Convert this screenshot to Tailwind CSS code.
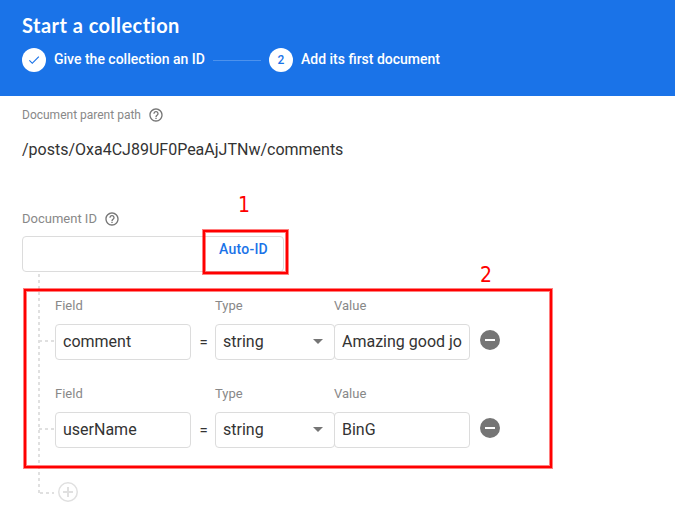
<!DOCTYPE html>
<html lang="en">
<head>
<meta charset="utf-8">
<title>Start a collection</title>
<script src="https://cdn.jsdelivr.net/npm/@tailwindcss/browser@4"></script>
</head>
<body class="relative h-[527px] w-[675px] overflow-hidden bg-white font-['Roboto',sans-serif] text-[#333333]">
<header class="flex h-24 flex-col bg-[#1a73e8] px-[22px] pt-[13px] text-white">
  <h1 class="h-6 font-['Lato',sans-serif] text-[20px] leading-6 font-bold tracking-[0.47px] whitespace-nowrap">Start a collection</h1>
  <div class="mt-[11px] flex h-6 items-center text-sm font-medium whitespace-nowrap">
    <span class="flex size-6 items-center justify-center rounded-full bg-white">
      <svg class="size-3.5" viewBox="0 0 24 24" fill="#1a73e8"><path d="M9 16.2L4.8 12l-1.4 1.4L9 19 21 7l-1.4-1.4z"/></svg>
    </span>
    <span class="ml-2 w-[151px] pb-0.5">Give the collection an ID</span>
    <span class="mx-2 mt-px h-px w-12 bg-[#4d92ed]"></span>
    <span class="flex size-6 items-center justify-center rounded-full bg-white text-xs text-[#1a73e8]">2</span>
    <span class="ml-2 pb-0.5">Add its first document</span>
  </div>
</header>
<main class="px-[22px] pt-[11px]">
  <div class="flex h-4 items-center text-xs text-[#888888]">
    <span>Document parent path</span>
    <svg class="ml-[7px] size-4" viewBox="0 0 24 24" fill="#757575"><path d="M11 18h2v-2h-2v2zm1-16C6.48 2 2 6.48 2 12s4.480 10 10 10 10-4.480 10-10S17.520 2 12 2zm0 18c-4.410 0-8-3.590-8-8s3.590-8 8-8 8 3.590 8 8-3.590 8-8 8zm0-14c-2.210 0-4 1.790-4 4h2c0-1.100.900-2 2-2s2 .900 2 2c0 2-3 1.750-3 5h2c0-2.250 3-2.500 3-5 0-2.210-1.790-4-4-4z"/></svg>
  </div>
  <div class="mt-[15px] h-6 text-base leading-6">/posts/Oxa4CJ89UF0PeaAjJTNw/comments</div>
  <div class="mt-[49px] flex h-4 items-center text-[13px] text-[#888888]">
    <span>Document ID</span>
    <svg class="ml-[7px] size-4" viewBox="0 0 24 24" fill="#757575"><path d="M11 18h2v-2h-2v2zm1-16C6.48 2 2 6.48 2 12s4.480 10 10 10 10-4.480 10-10S17.520 2 12 2zm0 18c-4.410 0-8-3.590-8-8s3.590-8 8-8 8 3.590 8 8-3.590 8-8 8zm0-14c-2.210 0-4 1.790-4 4h2c0-1.100.900-2 2-2s2 .900 2 2c0 2-3 1.750-3 5h2c0-2.250 3-2.500 3-5 0-2.210-1.790-4-4-4z"/></svg>
  </div>
  <div class="mt-[9px] flex h-9 w-[262px] justify-end rounded border border-[#dcdcdc] pt-1 pr-[15px]">
    <span class="text-sm leading-4 font-medium tracking-[0.25px] text-[#1a73e8]">Auto-ID</span>
  </div>
  <section class="ml-[33px] pt-[26px]">
    <div class="flex h-16 w-[450px]">
      <div class="w-[136px]"><div class="h-[26px] text-[13px] leading-4 text-[#888888]">Field</div><div class="h-9 rounded border border-[#dcdcdc] px-[7px] leading-[34px]">comment</div></div>
      <div class="w-6 pt-[26px] pl-px text-center text-[15px] leading-9">=</div>
      <div class="w-[120px]"><div class="h-[26px] text-[13px] leading-4 text-[#888888]">Type</div><div class="flex h-9 items-center justify-between rounded border border-[#dcdcdc] px-[7px]">string<svg class="mr-1 mb-px h-[5px] w-2.5" viewBox="0 0 10 5" fill="#757575"><path d="M0 0h10L5 5z"/></svg></div></div>
      <div class="-ml-px w-[136px]"><div class="h-[26px] text-[13px] leading-4 text-[#888888]">Value</div><div class="h-9 rounded border border-[#dcdcdc] px-[7px] leading-[34px]"><div class="overflow-hidden whitespace-nowrap">Amazing good jo</div></div></div>
      <svg class="mt-[30px] ml-2 size-6" viewBox="0 0 24 24" fill="#757575"><path d="M12 2a10 10 0 1 0 0 20 10 10 0 0 0 0-20zm5 11H7v-2h10v2z"/></svg>
    </div>
    <div class="mt-6 flex h-16 w-[450px]">
      <div class="w-[136px]"><div class="h-[26px] text-[13px] leading-4 text-[#888888]">Field</div><div class="h-9 rounded border border-[#dcdcdc] px-[7px] leading-[34px]">userName</div></div>
      <div class="w-6 pt-[26px] pl-px text-center text-[15px] leading-9">=</div>
      <div class="w-[120px]"><div class="h-[26px] text-[13px] leading-4 text-[#888888]">Type</div><div class="flex h-9 items-center justify-between rounded border border-[#dcdcdc] px-[7px]">string<svg class="mr-1 mb-px h-[5px] w-2.5" viewBox="0 0 10 5" fill="#757575"><path d="M0 0h10L5 5z"/></svg></div></div>
      <div class="-ml-px w-[136px]"><div class="h-[26px] text-[13px] leading-4 text-[#888888]">Value</div><div class="h-9 rounded border border-[#dcdcdc] px-[7px] leading-[34px]">BinG</div></div>
      <svg class="mt-[30px] ml-2 size-6" viewBox="0 0 24 24" fill="#757575"><path d="M12 2a10 10 0 1 0 0 20 10 10 0 0 0 0-20zm5 11H7v-2h10v2z"/></svg>
    </div>
    <svg class="mt-[30px] ml-px size-6" viewBox="0 0 24 24" fill="#e0e0e0"><path d="M13 7h-2v4H7v2h4v4h2v-4h4v-2h-4V7zm-1-5a10 10 0 1 0 0 20 10 10 0 0 0 0-20zm0 18.500a8.500 8.500 0 1 1 0-17 8.500 8.500 0 0 1 0 17z"/></svg>
  </section>
</main>
<!-- Dashed tree connectors -->
<svg class="absolute top-[272px] left-[38px] h-[223px] w-[17px]" viewBox="0 0 17 223" fill="none" stroke="#e0e0e0" stroke-width="2" stroke-dasharray="3 3"><path d="M1 2v219M1 69h15M1 157h15M2 221h14"/></svg>
<!-- Numbered callouts -->
<div class="absolute top-[230px] left-[203px] h-[44px] w-[85px] border-2 border-[#ff0000] shadow-[0_0_0_1px_#ff000080,inset_0_0_0_1px_#ff000080]"></div>
<div class="absolute top-[289px] left-[24px] h-[179px] w-[528px] border-2 border-[#ff0000] shadow-[0_0_0_1px_#ff000080,inset_0_0_0_1px_#ff000080]"></div>
<span class="absolute top-[191px] left-[238px] font-['DejaVu_Sans_Condensed','DejaVu_Sans',sans-serif] text-[21px] leading-7 text-[#ff0000]">1</span>
<span class="absolute top-[261px] left-[480px] font-['DejaVu_Sans_Condensed','DejaVu_Sans',sans-serif] text-[21px] leading-7 text-[#ff0000]">2</span>
</body>
</html>
